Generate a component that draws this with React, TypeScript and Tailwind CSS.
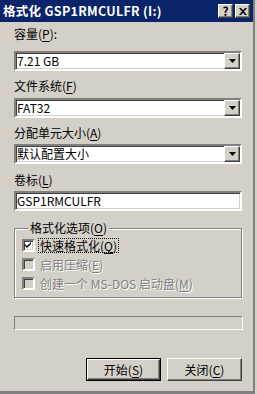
import React from "react";

const raised =
  "bg-[#d4d0c8] border border-t-white border-l-white border-r-[#404040] border-b-[#404040] shadow-[inset_-1px_-1px_0_#808080]";
const sunken =
  "border-2 border-t-[#808080] border-l-[#808080] border-r-white border-b-white shadow-[inset_1px_1px_0_#404040,inset_-1px_-1px_0_#d4d0c8]";

function U({ c }: { c: string }) {
  return <span className="underline underline-offset-2">{c}</span>;
}

function Combo({ text }: { text: string }) {
  return (
    <div className={`h-[20px] w-[228px] bg-white flex items-center ${sunken}`}>
      <span className="pl-[1px] text-[12px] leading-[14px] text-black flex-1">{text}</span>
      <div className={`w-[16px] h-[16px] flex items-center justify-center ${raised}`}>
        <svg width="7" height="4" viewBox="0 0 7 4">
          <path d="M0 0H7L3.5 4Z" fill="#000" />
        </svg>
      </div>
    </div>
  );
}

function Check({ checked, disabled, children, focus }: { checked?: boolean; disabled?: boolean; children: React.ReactNode; focus?: boolean }) {
  return (
    <div className="flex items-center h-[19px]">
      <div className={`w-[13px] h-[13px] flex items-center justify-center ${disabled ? "bg-[#d4d0c8]" : "bg-white"} ${sunken}`}>
        {checked && (
          <svg width="7" height="7" viewBox="0 0 7 7">
            <path d="M0 2L2 4L6 0V2L2 6L0 4Z" fill="#000" />
          </svg>
        )}
      </div>
      <span
        className={`ml-[3px] px-[1px] text-[12px] leading-[13px] ${
          disabled ? "text-[#808080] [text-shadow:1px_1px_0_#fff]" : "text-black"
        } ${focus ? "border border-dotted border-black" : "border border-transparent"}`}
      >
        {children}
      </span>
    </div>
  );
}

export default function App() {
  return (
    <div className="w-[257px] h-[394px] bg-[#d4d0c8] font-['Noto_Sans_CJK_SC','Noto_Sans',sans-serif] overflow-hidden">
      <div className="w-[255px] h-[394px] border-r-2 border-r-[#808080] border-b-[3px] border-b-[#808080]">
        {/* title bar */}
        <div className="h-[22px] bg-[#0a246a] flex items-center pl-[3px] pr-[3px]">
          <span className="text-white font-bold text-[12.5px] leading-[14px] tracking-[0.3px]">
            格式化 GSP1RMCULFR (I:)
          </span>
          <div className="ml-auto flex gap-[2px]">
            <div className={`w-[15px] h-[14px] flex items-center justify-center ${raised}`}>
              <span className="text-black font-bold text-[12px] leading-[12px]">?</span>
            </div>
            <div className={`w-[15px] h-[14px] flex items-center justify-center ${raised}`}>
              <svg width="8" height="7" viewBox="0 0 8 7">
                <path d="M0 0H2L4 2.3L6 0H8L5 3.5L8 7H6L4 4.7L2 7H0L3 3.5Z" fill="#000" />
              </svg>
            </div>
          </div>
        </div>

        <div className="pl-[14px] text-[12px] text-black">
          <div className="mt-[5px] leading-[14px]">
            容量(<U c="P" />):
          </div>
          <div className="mt-[10px]">
            <Combo text="7.21 GB" />
          </div>
          <div className="mt-[8px] leading-[14px]">
            文件系统(<U c="F" />)
          </div>
          <div className="mt-[5px]">
            <Combo text="FAT32" />
          </div>
          <div className="mt-[8px] leading-[14px]">
            分配单元大小(<U c="A" />)
          </div>
          <div className="mt-[4px]">
            <Combo text="默认配置大小" />
          </div>
          <div className="mt-[9px] leading-[14px]">
            卷标(<U c="L" />)
          </div>
          <div className={`mt-[4px] h-[20px] w-[228px] bg-white flex items-center ${sunken}`}>
            <span className="pl-[1px] leading-[14px]">GSP1RMCULFR</span>
          </div>

          <fieldset className="mt-[10px] w-[228px] h-[77px] border border-[#808080] shadow-[1px_1px_0_#fff,inset_1px_1px_0_#fff] pl-[7px] pt-[1px]">
            <legend className="ml-[6px] px-[2px] bg-[#d4d0c8] leading-[14px]">
              格式化选项(<U c="O" />)
            </legend>
            <Check checked focus>
              快速格式化(<U c="Q" />)
            </Check>
            <Check disabled>
              启用压缩(<U c="E" />)
            </Check>
            <Check disabled>
              创建一个 MS-DOS 启动盘(<U c="M" />)
            </Check>
          </fieldset>

          <div className="mt-[18px] w-[229px] h-[14px] border border-t-[#808080] border-l-[#808080] border-r-white border-b-white" />

          <div className="mt-[28px] w-[228px] flex justify-end gap-[6px]">
            <div className="w-[75px] h-[23px] border border-black">
              <div className={`w-full h-full flex items-center justify-center ${raised}`}>
                <span className="leading-[14px]">
                  开始(<U c="S" />)
                </span>
              </div>
            </div>
            <div className={`w-[75px] h-[23px] flex items-center justify-center ${raised}`}>
              <span className="leading-[14px]">
                关闭(<U c="C" />)
              </span>
            </div>
          </div>
        </div>
      </div>
    </div>
  );
}
